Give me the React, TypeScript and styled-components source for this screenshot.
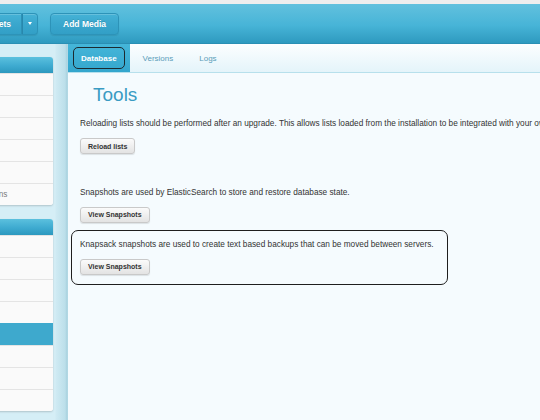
import React from 'react';
import styled, { createGlobalStyle } from 'styled-components';

const GlobalStyle = createGlobalStyle`
  html, body { margin: 0; padding: 0; }
  body {
    font-family: "Liberation Sans", Arial, sans-serif;
    background: #f5fbfe;
    overflow: hidden;
  }
  * { box-sizing: border-box; }
`;

const Page = styled.div`
  width: 540px;
  height: 420px;
  display: flex;
  flex-direction: column;
  overflow: hidden;
`;

const TopStrip = styled.div`
  flex: none;
  height: 4px;
  background: #eeeeee;
`;

const Header = styled.header`
  flex: none;
  height: 40px;
  display: flex;
  align-items: center;
  gap: 12px;
  background: linear-gradient(#62c1de, #47b4d7 55%, #2e9abf);
  border-bottom: 1px solid #2a8fb4;
`;

const SplitGroup = styled.div`
  display: flex;
  margin-left: -28px;
  height: 22px;
`;

const HeaderButton = styled.button<{ $part?: 'main' | 'caret' }>`
  height: 22px;
  display: flex;
  align-items: center;
  justify-content: center;
  padding: ${(p) => (p.$part === 'caret' ? '0' : '0 12px')};
  width: ${(p) => (p.$part === 'caret' ? '16px' : p.$part === 'main' ? '50px' : 'auto')};
  font-family: "Liberation Sans", Arial, sans-serif;
  font-size: 8.5px;
  font-weight: bold;
  color: #ffffff;
  text-shadow: 0 -1px 0 rgba(0, 0, 0, 0.15);
  background: linear-gradient(#45b2d6, #3aa7cd 50%, #329fc6);
  border: 1px solid #2d93b8;
  border-radius: ${(p) =>
    p.$part === 'main' ? '4px 0 0 4px' : p.$part === 'caret' ? '0 4px 4px 0' : '4px'};
  border-left-color: ${(p) => (p.$part === 'caret' ? '#2888ad' : '#2d93b8')};
  box-shadow: inset 0 1px 0 rgba(255, 255, 255, 0.18), 0 1px 1px rgba(0, 0, 0, 0.08);
`;

const Caret = styled.span`
  width: 0;
  height: 0;
  border-left: 2.5px solid transparent;
  border-right: 2.5px solid transparent;
  border-top: 3px solid #ffffff;
`;

const Body = styled.div`
  flex: 1;
  display: flex;
  min-height: 0;
`;

const Sidebar = styled.aside`
  flex: none;
  width: 68px;
  display: flex;
  flex-direction: column;
  gap: 14px;
  padding-top: 13px;
  background: linear-gradient(
    to right,
    #d5eef6 0,
    #d5eef6 55px,
    #cfeaf3 56px,
    #bcdfea 65px,
    #a9d2df 67px,
    #b9dde8 68px
  );
`;

const Panel = styled.section`
  width: 98px;
  margin-left: -45px;
  background: #fafafa;
  border-radius: 0 3px 3px 0;
  box-shadow: 0 1px 2px rgba(0, 0, 0, 0.18);
  overflow: hidden;
`;

const PanelHeader = styled.div`
  height: 16px;
  background: linear-gradient(#5bc0de, #3eaad0 55%, #2c98be);
`;

const PanelRow = styled.div<{ $active?: boolean }>`
  height: 22px;
  display: flex;
  align-items: center;
  padding-left: 12px;
  border-top: 1px solid ${(p) => (p.$active ? '#3ea9cd' : '#e4e4e4')};
  background: ${(p) => (p.$active ? '#3ea9cd' : '#fafafa')};
  font-size: 8.25px;
  color: #7a7a7a;
  white-space: nowrap;
  &:first-of-type { border-top-color: transparent; }
`;

const Content = styled.main`
  flex: 1;
  display: flex;
  flex-direction: column;
  background: #f5fbfe;
  min-width: 0;
`;

const TabBar = styled.nav`
  flex: none;
  height: 29px;
  display: flex;
  background: linear-gradient(#fcfeff, #e4f4fa);
  border-bottom: 1px solid #b7e0ec;
`;

const Tab = styled.div<{ $active?: boolean }>`
  display: flex;
  padding: 3px 5px;
  background: ${(p) => (p.$active ? 'linear-gradient(#45b6d9, #34a6cd)' : 'transparent')};
`;

const TabLink = styled.a<{ $active?: boolean }>`
  display: flex;
  align-items: center;
  padding: 0 7px;
  border: 1.5px solid ${(p) => (p.$active ? '#1c2a30' : 'transparent')};
  border-radius: 5px;
  font-size: 8px;
  font-weight: ${(p) => (p.$active ? 'bold' : 'normal')};
  color: ${(p) => (p.$active ? '#ffffff' : '#5b9db9')};
  text-decoration: none;
`;

const Main = styled.div`
  padding: 11px 0 0 3px;
`;

const Title = styled.h1`
  margin: 0 0 3px 22px;
  font-size: 19px;
  line-height: 22px;
  font-weight: normal;
  color: #3a9bc3;
`;

const Section = styled.div<{ $focused?: boolean; $gap: number }>`
  width: 377px;
  margin-top: ${(p) => p.$gap}px;
  padding: 8px 8px 9px 8px;
  border: 1.5px solid ${(p) => (p.$focused ? '#1e1e1e' : 'transparent')};
  border-radius: 7px;
`;

const Text = styled.p`
  margin: 0;
  font-size: 8.25px;
  line-height: 12px;
  color: #333333;
  white-space: nowrap;
`;

const Button = styled.button`
  display: block;
  margin-top: 8px;
  height: 16px;
  padding: 0 7px;
  font-family: "Liberation Sans", Arial, sans-serif;
  font-size: 7px;
  font-weight: bold;
  color: #333333;
  background: linear-gradient(#fbfbfb, #e3e3e3);
  border: 1px solid #c9c9c9;
  border-radius: 3px;
  box-shadow: 0 1px 1px rgba(0, 0, 0, 0.1);
`;

export default function App() {
  return (
    <Page>
      <GlobalStyle />
      <TopStrip />
      <Header>
        <SplitGroup>
          <HeaderButton $part="main">Assets</HeaderButton>
          <HeaderButton $part="caret">
            <Caret />
          </HeaderButton>
        </SplitGroup>
        <HeaderButton>Add Media</HeaderButton>
      </Header>
      <Body>
        <Sidebar>
          <Panel>
            <PanelHeader />
            <PanelRow />
            <PanelRow />
            <PanelRow />
            <PanelRow />
            <PanelRow />
            <PanelRow>Extensions</PanelRow>
          </Panel>
          <Panel>
            <PanelHeader />
            <PanelRow />
            <PanelRow />
            <PanelRow />
            <PanelRow />
            <PanelRow $active />
            <PanelRow />
            <PanelRow />
            <PanelRow />
          </Panel>
        </Sidebar>
        <Content>
          <TabBar>
            <Tab $active>
              <TabLink $active href="#">Database</TabLink>
            </Tab>
            <Tab>
              <TabLink href="#">Versions</TabLink>
            </Tab>
            <Tab>
              <TabLink href="#">Logs</TabLink>
            </Tab>
          </TabBar>
          <Main>
            <Title>Tools</Title>
            <Section $gap={0}>
              <Text>
                Reloading lists should be performed after an upgrade. This allows lists loaded from the installation to be integrated with your own lists.
              </Text>
              <Button>Reload lists</Button>
            </Section>
            <Section $gap={13.5}>
              <Text>Snapshots are used by ElasticSearch to store and restore database state.</Text>
              <Button>View Snapshots</Button>
            </Section>
            <Section $gap={-3} $focused>
              <Text>
                Knapsack snapshots are used to create text based backups that can be moved between servers.
              </Text>
              <Button>View Snapshots</Button>
            </Section>
          </Main>
        </Content>
      </Body>
    </Page>
  );
}
